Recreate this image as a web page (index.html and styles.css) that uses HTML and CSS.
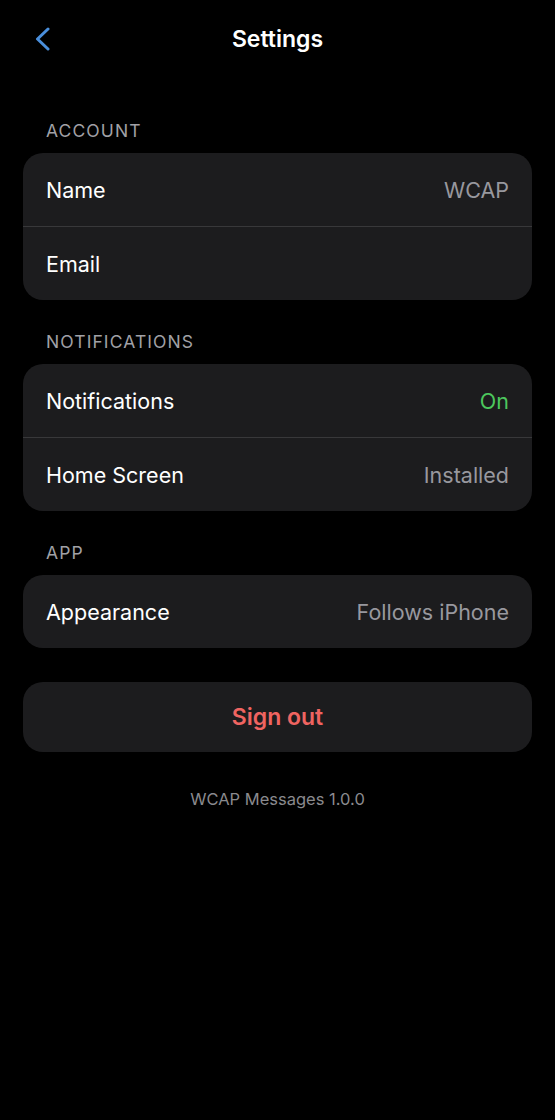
FILE: index.html
```html
<!DOCTYPE html>
<html lang="en">

<head>
  <meta charset="UTF-8">
  <meta name="viewport" content="width=device-width, initial-scale=1.0">
  <title>Settings</title>
  <link rel="stylesheet" href="styles.css">
</head>

<body>
  <header class="nav-bar">
    <button class="back-btn" aria-label="Back">
      <svg width="17" height="24" viewBox="0 0 17 24">
        <path d="M14 2 L3.5 12 L14 22" fill="none" stroke="#4a8fdc" stroke-width="3" stroke-linecap="round" stroke-linejoin="round" />
      </svg>
    </button>
    <h1 class="nav-title">Settings</h1>
  </header>

  <main class="settings">
    <section class="group">
      <div class="group-label">ACCOUNT</div>
      <div class="card">
        <div class="row">
          <span class="row-title">Name</span>
          <span class="row-value">WCAP</span>
        </div>
        <div class="row">
          <span class="row-title">Email</span>
          <span class="row-value"></span>
        </div>
      </div>
    </section>

    <section class="group">
      <div class="group-label">NOTIFICATIONS</div>
      <div class="card">
        <div class="row">
          <span class="row-title">Notifications</span>
          <span class="row-value on">On</span>
        </div>
        <div class="row">
          <span class="row-title">Home Screen</span>
          <span class="row-value">Installed</span>
        </div>
      </div>
    </section>

    <section class="group">
      <div class="group-label">APP</div>
      <div class="card">
        <div class="row">
          <span class="row-title">Appearance</span>
          <span class="row-value">Follows iPhone</span>
        </div>
      </div>
    </section>

    <button class="sign-out">Sign out</button>

    <p class="version">WCAP Messages 1.0.0</p>
  </main>
</body>

</html>
```

FILE: styles.css
```css
body {
  font-family: Inter, "Noto Sans", sans-serif;
  background: #000;
  color: #fff;
  margin: 0;
}

.nav-bar {
  position: relative;
  height: 78px;
  display: flex;
  justify-content: center;
  align-items: center;
}

.back-btn {
  position: absolute;
  left: 34px;
  top: 27px;
  padding: 0;
  background: none;
  border: none;
  cursor: pointer;
}

.back-btn svg {
  display: block;
}

.nav-title {
  margin: 0;
  font-size: 23px;
  font-weight: 600;
}

.settings {
  padding: 0 23px;
}

.group {
  margin-top: 31px;
}

.group:first-child {
  margin-top: 42px;
}

.group-label {
  padding: 0 23px;
  margin-bottom: 11px;
  font-size: 17.5px;
  line-height: 22px;
  letter-spacing: 1.1px;
  color: #a1a1a6;
}

.card {
  background: #1c1c1e;
  border-radius: 20px;
  overflow: hidden;
}

.row {
  box-sizing: border-box;
  height: 73px;
  padding: 0 23px;
  display: flex;
  justify-content: space-between;
  align-items: center;
  font-size: 21.5px;
}

.row + .row {
  border-top: 1px solid #38383a;
  height: 74px;
}

.row-value {
  color: #98989e;
}

.row-value.on {
  color: #4cc75d;
}

.sign-out {
  display: block;
  width: 100%;
  height: 70px;
  margin-top: 34px;
  background: #1c1c1e;
  border: none;
  border-radius: 20px;
  font-family: inherit;
  font-size: 23px;
  font-weight: 600;
  color: #ef6461;
  cursor: pointer;
}

.version {
  margin: 37px 0 0;
  text-align: center;
  font-size: 16.5px;
  line-height: 20px;
  color: #8a8a8e;
}
```
